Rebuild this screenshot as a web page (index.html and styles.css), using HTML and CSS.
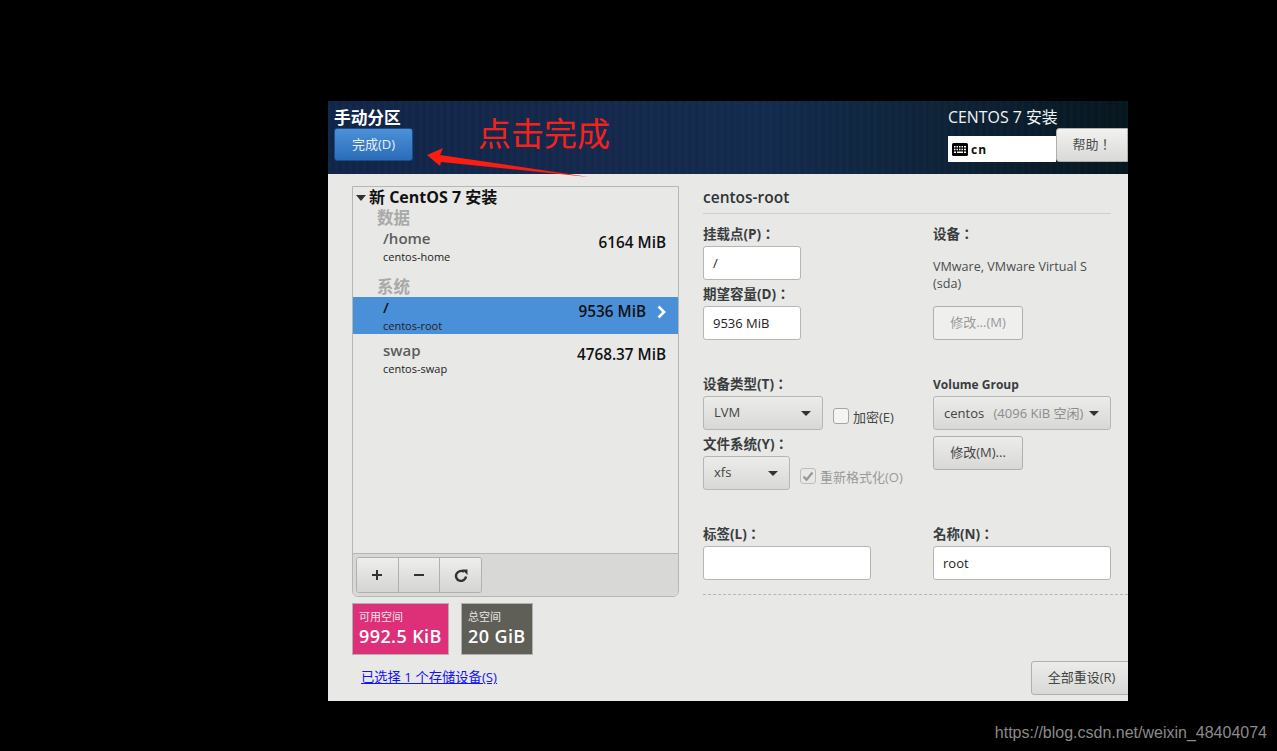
FILE: index.html
```html
<!DOCTYPE html>
<html lang="zh-CN">
<head>
  <meta charset="UTF-8" />
  <meta name="viewport" content="width=device-width, initial-scale=1.0" />
  <title>手动分区</title>
  <link rel="stylesheet" href="styles.css">
</head>
<body>
  <div class="installer">
    <header class="top-bar">
      <div class="top-left">
        <h1 class="spoke-title">手动分区</h1>
        <button class="done-btn">完成(D)</button>
      </div>
      <div class="annotation-text">点击完成</div>
      <div class="top-right">
        <div class="product-title">CENTOS 7 安装</div>
        <div class="top-tools">
          <div class="keyboard-box">
            <svg class="keyboard-icon" width="16" height="13" viewBox="0 0 16 13">
              <rect width="16" height="13" rx="1.5" fill="#000"/>
              <path d="M2 3h1.500v1.500H2zM4.500 3H6v1.500H4.500zM7 3h1.500v1.500H7zM9.500 3H11v1.500H9.500zM12 3h2v1.500h-2zM2 5.700h1.500v1.500H2zM4.500 5.700H6v1.500H4.500zM7 5.700h1.500v1.500H7zM9.500 5.700H11v1.500H9.500zM12 5.700h2v1.500h-2zM2 8.500h2v1.500H2zM5 8.500h6v1.500H5zM12 8.500h2v1.500h-2z" fill="#fff"/>
            </svg>
            <span>cn</span>
          </div>
          <button class="help-btn">帮助！</button>
        </div>
      </div>
    </header>

    <main class="content">
      <section class="left-side">
        <div class="mount-panel">
          <div class="mount-list">
            <div class="tree-title"><span class="tree-arrow"></span>新 CentOS 7 安装</div>
            <div class="group-label">数据</div>
            <div class="mount-row home-row">
              <div>
                <div class="mount-name">/home</div>
                <div class="mount-sub">centos-home</div>
              </div>
              <div class="mount-size">6164 MiB</div>
            </div>
            <div class="group-label system-label">系统</div>
            <div class="mount-row selected">
              <div>
                <div class="mount-name">/</div>
                <div class="mount-sub">centos-root</div>
              </div>
              <div class="mount-size">9536 MiB</div>
              <svg class="row-chevron" width="11" height="14" viewBox="0 0 11 14">
                <path d="M2.500 1.500L8 7l-5.500 5.500" fill="none" stroke="#fff" stroke-width="2.600"/>
              </svg>
            </div>
            <div class="mount-row swap-row">
              <div>
                <div class="mount-name">swap</div>
                <div class="mount-sub">centos-swap</div>
              </div>
              <div class="mount-size">4768.37 MiB</div>
            </div>
          </div>
          <div class="panel-toolbar">
            <div class="tool-group">
              <button class="tool-btn">
                <svg width="12" height="12" viewBox="0 0 12 12"><path d="M6 1v10M1 6h10" stroke="#2e3436" stroke-width="2"/></svg>
              </button>
              <button class="tool-btn">
                <svg width="12" height="12" viewBox="0 0 12 12"><path d="M1 6h10" stroke="#2e3436" stroke-width="2"/></svg>
              </button>
              <button class="tool-btn">
                <svg width="14" height="13" viewBox="0 0 14 13">
                  <path d="M12 7.500A5 5 0 1 1 10 2.900" fill="none" stroke="#2e3436" stroke-width="2.400"/>
                  <path d="M8 .5h5.500V6z" fill="#2e3436"/>
                </svg>
              </button>
            </div>
          </div>
        </div>
        <div class="space-boxes">
          <div class="space-box free">
            <div class="space-label">可用空间</div>
            <div class="space-value">992.5 KiB</div>
          </div>
          <div class="space-box total">
            <div class="space-label">总空间</div>
            <div class="space-value">20 GiB</div>
          </div>
        </div>
        <a class="device-link" href="#">已选择 1 个存储设备(S)</a>
      </section>

      <section class="details">
        <h2 class="details-title">centos-root</h2>
        <div class="details-cols">
          <div class="col">
            <label class="field-label">挂载点(P)：</label>
            <input class="text-input w-small" value="/">
            <label class="field-label next-label">期望容量(D)：</label>
            <input class="text-input w-small" value="9536 MiB">

            <label class="field-label section-gap">设备类型(T)：</label>
            <div class="inline-row">
              <div class="combo w-lvm"><span>LVM</span><i class="combo-arrow"></i></div>
              <div class="check-wrap">
                <span class="check-box"></span><span class="check-text">加密(E)</span>
              </div>
            </div>
            <label class="field-label next-label">文件系统(Y)：</label>
            <div class="inline-row">
              <div class="combo w-xfs"><span>xfs</span><i class="combo-arrow"></i></div>
              <div class="check-wrap reformat">
                <span class="check-box checked">
                  <svg width="12" height="11" viewBox="0 0 12 11"><path d="M1.500 5.500l3 3.200L10.500 1.500" fill="none" stroke="#9a9a98" stroke-width="2.400"/></svg>
                </span>
                <span class="check-text muted">重新格式化(O)</span>
              </div>
            </div>

            <label class="field-label label-gap">标签(L)：</label>
            <input class="text-input w-label">
          </div>

          <div class="col">
            <label class="field-label">设备：</label>
            <div class="device-text">VMware, VMware Virtual S<br>(sda)</div>
            <button class="gtk-btn small-btn disabled">修改...(M)</button>

            <label class="field-label vg-label">Volume Group</label>
            <div class="combo w-vg"><span>centos <em>(4096 KiB 空闲)</em></span><i class="combo-arrow"></i></div>
            <button class="gtk-btn small-btn vg-btn">修改(M)...</button>

            <label class="field-label name-label">名称(N)：</label>
            <input class="text-input w-vg" value="root">
          </div>
        </div>
        <div class="dash-line"></div>
        <div class="reset-row">
          <button class="gtk-btn reset-btn">全部重设(R)</button>
        </div>
      </section>
    </main>

    <svg class="annotation-arrow" width="170" height="34" viewBox="0 0 170 34">
      <path d="M0 7L16 0L13 7L162 29L14 14L13 18z" fill="#fb1c12"/>
    </svg>
  </div>
  <div class="watermark">https://blog.csdn.net/weixin_48404074</div>
</body>
</html>
```

FILE: styles.css
```css
* {
  box-sizing: border-box;
}

html,
body {
  height: 100%;
}

body {
  margin: 0;
  background: #000;
  padding: 101px 0 0 328px;
  font-family: 'Open Sans', 'Noto Sans CJK SC', sans-serif;
  color: #2e3436;
  overflow: hidden;
  position: relative;
}

.installer {
  width: 800px;
  height: 600px;
  background: #e8e8e7;
  position: relative;
  overflow: hidden;
}

/* header */
.top-bar {
  height: 73px;
  display: flex;
  color: #fff;
  background:
    repeating-linear-gradient(90deg, rgba(255, 255, 255, 0.008) 0 3px, rgba(0, 0, 0, 0.03) 3px 7px),
    linear-gradient(90deg, #11264a 0%, #15294e 30%, #132c4e 55%, #0e2338 78%, #06171f 100%);
}

.top-left {
  width: 150px;
  padding: 7px 0 0 6px;
}

.spoke-title {
  margin: 0;
  font-size: 16.700px;
  line-height: 19px;
  font-weight: 700;
}

.done-btn {
  display: block;
  width: 79px;
  height: 33px;
  margin-top: 1px;
  border: 1px solid #1d4d88;
  border-radius: 3px;
  background: linear-gradient(#4c91da, #2a6cb8);
  color: #e9f0f8;
  font-family: inherit;
  font-size: 13px;
  padding: 0 0 2px;
}

.annotation-text {
  margin: 11px 0 0 0;
  font-size: 33px;
  line-height: 40px;
  color: #f5221b;
  font-family: 'Noto Sans CJK SC', sans-serif;
  height: 40px;
}

.top-right {
  margin-left: auto;
  width: 180px;
  padding-top: 6px;
}

.product-title {
  font-size: 15.900px;
  line-height: 21px;
  color: #f2f4f6;
}

.top-tools {
  display: flex;
}

.keyboard-box {
  width: 108px;
  height: 26px;
  margin-top: 8px;
  background: #fff;
  color: #111;
  display: flex;
  align-items: center;
  padding-left: 4px;
  gap: 3px;
  font-size: 12px;
  font-weight: 700;
  letter-spacing: 1.2px;
}

.help-btn {
  width: 72px;
  height: 34px;
  border: 1px solid #b0b0ae;
  border-radius: 3px 0 0 3px;
  background: linear-gradient(#f2f2f1, #d9d9d7);
  color: #4a4d4e;
  font-family: 'Open Sans', 'Noto Sans CJK TC', sans-serif;
  font-feature-settings: "locl" 0;
  font-size: 13px;
  text-spacing-trim: space-all;
  padding: 0 0 3px;
}

/* main area */
.content {
  display: flex;
  height: 527px;
}

.left-side {
  width: 351px;
  padding: 12px 0 0 24px;
}

.mount-panel {
  width: 327px;
  height: 411px;
  border: 1px solid #b6b6b3;
  border-radius: 0 0 6px 6px;
  display: flex;
  flex-direction: column;
}

.mount-list {
  flex: 1;
}

.tree-title {
  height: 21px;
  padding: 0 0 0 3px;
  font-size: 16px;
  line-height: 19px;
  font-weight: 700;
  color: #111;
  display: flex;
  align-items: center;
  gap: 3px;
}

.tree-arrow {
  width: 0;
  height: 0;
  border-left: 5px solid transparent;
  border-right: 5px solid transparent;
  border-top: 6px solid #2e3436;
}

.group-label {
  padding-left: 24px;
  font-size: 16.500px;
  line-height: 19px;
  font-weight: 700;
  color: #a9a9a7;
  margin-bottom: 1px;
}

.mount-row {
  height: 37px;
  padding: 0 12px 0 30px;
  display: flex;
  justify-content: space-between;
  position: relative;
}

.home-row {
  height: 49px;
}

.mount-name {
  font-size: 15px;
  line-height: 20px;
  font-weight: 600;
  color: #5c5c5c;
}

.mount-sub {
  font-size: 11px;
  line-height: 16px;
  margin-top: 1px;
  color: #222;
}

.mount-size {
  font-size: 15.300px;
  line-height: 20px;
  font-weight: 600;
  color: #111;
  margin-top: 4px;
}

.selected {
  background: #4a90d9;
  height: 37px;
  padding-right: 32px;
}

.selected .mount-name {
  color: #111;
}

.row-chevron {
  position: absolute;
  right: 11px;
  top: 8px;
}

.swap-row {
  padding-top: 6px;
}

.panel-toolbar {
  height: 43px;
  background: #d8d8d6;
  border-top: 1px solid #b6b6b3;
  border-radius: 0 0 6px 6px;
  padding: 3px 0 0 3px;
}

.tool-group {
  display: flex;
  width: 126px;
  height: 36px;
  border: 1px solid #b0b0ae;
  border-radius: 3px;
  overflow: hidden;
}

.tool-btn {
  flex: 1;
  border: none;
  border-right: 1px solid #b0b0ae;
  background: linear-gradient(#eeeeed, #d4d4d2);
  padding: 0;
  display: flex;
  align-items: center;
  justify-content: center;
}

.tool-btn:last-child {
  border-right: none;
}

.space-boxes {
  display: flex;
  gap: 12px;
  margin-top: 6px;
}

.space-box {
  height: 52px;
  border: 1px solid #b0b0ae;
  padding: 6px 0 0 6px;
  color: #fff;
  white-space: nowrap;
}

.free {
  width: 97px;
  background: #de3079;
}

.total {
  width: 72px;
  background: #5f5f57;
}

.space-label {
  font-size: 11px;
  line-height: 14px;
  opacity: 0.85;
}

.space-value {
  font-size: 18px;
  line-height: 24px;
  letter-spacing: 0.4px;
  font-weight: 600;
}

.device-link {
  display: inline-block;
  margin: 12px 0 0 9px;
  color: #1414f0;
  font-size: 13.300px;
  line-height: 20px;
}

/* right side */
.details {
  flex: 1;
  padding: 12px 0 0 24px;
}

.details-title {
  margin: 0;
  width: 408px;
  height: 28px;
  border-bottom: 1px solid #cfcfcd;
  font-size: 15.500px;
  line-height: 22px;
  font-weight: 600;
  color: #2e3436;
}

.details-cols {
  display: flex;
  gap: 52px;
  padding-top: 11px;
}

.col {
  width: 178px;
  display: flex;
  flex-direction: column;
  align-items: flex-start;
}

.field-label {
  height: 20px;
  font-family: 'Open Sans', 'Noto Sans CJK TC', sans-serif;
  font-feature-settings: "locl" 0;
  font-size: 13.500px;
  line-height: 18px;
  font-weight: 700;
  color: #3a3d3e;
  margin-bottom: 1px;
  text-spacing-trim: space-all;
}

.next-label {
  margin-top: 5px;
}

.section-gap {
  margin-top: 35px;
}

.label-gap {
  margin-top: 35px;
}

.text-input {
  height: 34px;
  border: 1px solid #b6b6b3;
  border-radius: 3px;
  background: #fff;
  padding: 0 9px 1px;
  font-family: inherit;
  font-size: 13px;
  color: #222;
  outline: none;
}

.w-small {
  width: 98px;
}

.w-label {
  width: 168px;
}

.w-vg {
  width: 178px;
}

.inline-row {
  display: flex;
  width: 220px;
}

.combo {
  height: 34px;
  border: 1px solid #b6b6b3;
  border-radius: 3px;
  background: linear-gradient(#ececeb, #d8d8d6);
  display: flex;
  align-items: center;
  justify-content: space-between;
  padding: 0 11px 2px 10px;
  font-size: 13px;
  color: #444;
  flex-shrink: 0;
  white-space: nowrap;
}

.combo em {
  font-style: normal;
  color: #8c8c8a;
  padding-left: 6px;
}

.combo-arrow {
  width: 0;
  height: 0;
  border-left: 5px solid transparent;
  border-right: 5px solid transparent;
  border-top: 5px solid #2e3436;
  margin-top: 2px;
}

.w-lvm {
  width: 120px;
}

.w-xfs {
  width: 87px;
}

.check-wrap {
  display: flex;
  align-items: center;
  gap: 4px;
  margin: 6px 0 0 10px;
  font-size: 13px;
  white-space: nowrap;
}

.check-box {
  width: 16px;
  height: 16px;
  border: 1px solid #a5a5a3;
  border-radius: 3px;
  background: #f4f4f3;
  display: flex;
  align-items: center;
  justify-content: center;
}

.check-box.checked {
  background: #e8e8e7;
  border-color: #bdbdbb;
}

.check-text {
  color: #444;
}

.muted {
  color: #9a9a98;
}

.device-text {
  font-size: 12.600px;
  line-height: 17px;
  color: #4a4d4e;
  margin: 12px 0 14px;
}

.gtk-btn {
  border: 1px solid #b0b0ae;
  border-radius: 3px;
  background: linear-gradient(#ececeb, #d8d8d6);
  color: #444;
  font-family: inherit;
  font-size: 13px;
  padding: 0 0 3px;
}

.small-btn {
  width: 90px;
  height: 34px;
}

.disabled {
  background: #efefee;
  color: #9a9a98;
}

.vg-label {
  margin-top: 35px;
  font-size: 12px;
  line-height: 20px;
}

.vg-btn {
  margin-top: 6px;
}

.name-label {
  margin-top: 55px;
}

.dash-line {
  margin-top: 14px;
  border-top: 1px dashed #b6b6b3;
}

.reset-row {
  display: flex;
  justify-content: flex-end;
  margin-top: 66px;
}

.reset-btn {
  width: 100px;
  height: 34px;
  margin-right: -3px;
  padding-left: 1px;
}

/* red arrow and watermark sit on top of the screenshot */
.annotation-arrow {
  position: absolute;
  left: 99px;
  top: 47px;
}

.watermark {
  position: absolute;
  right: 10px;
  bottom: 9px;
  font-family: 'Liberation Sans', sans-serif;
  font-size: 16px;
  color: #8a8a8a;
}
```
